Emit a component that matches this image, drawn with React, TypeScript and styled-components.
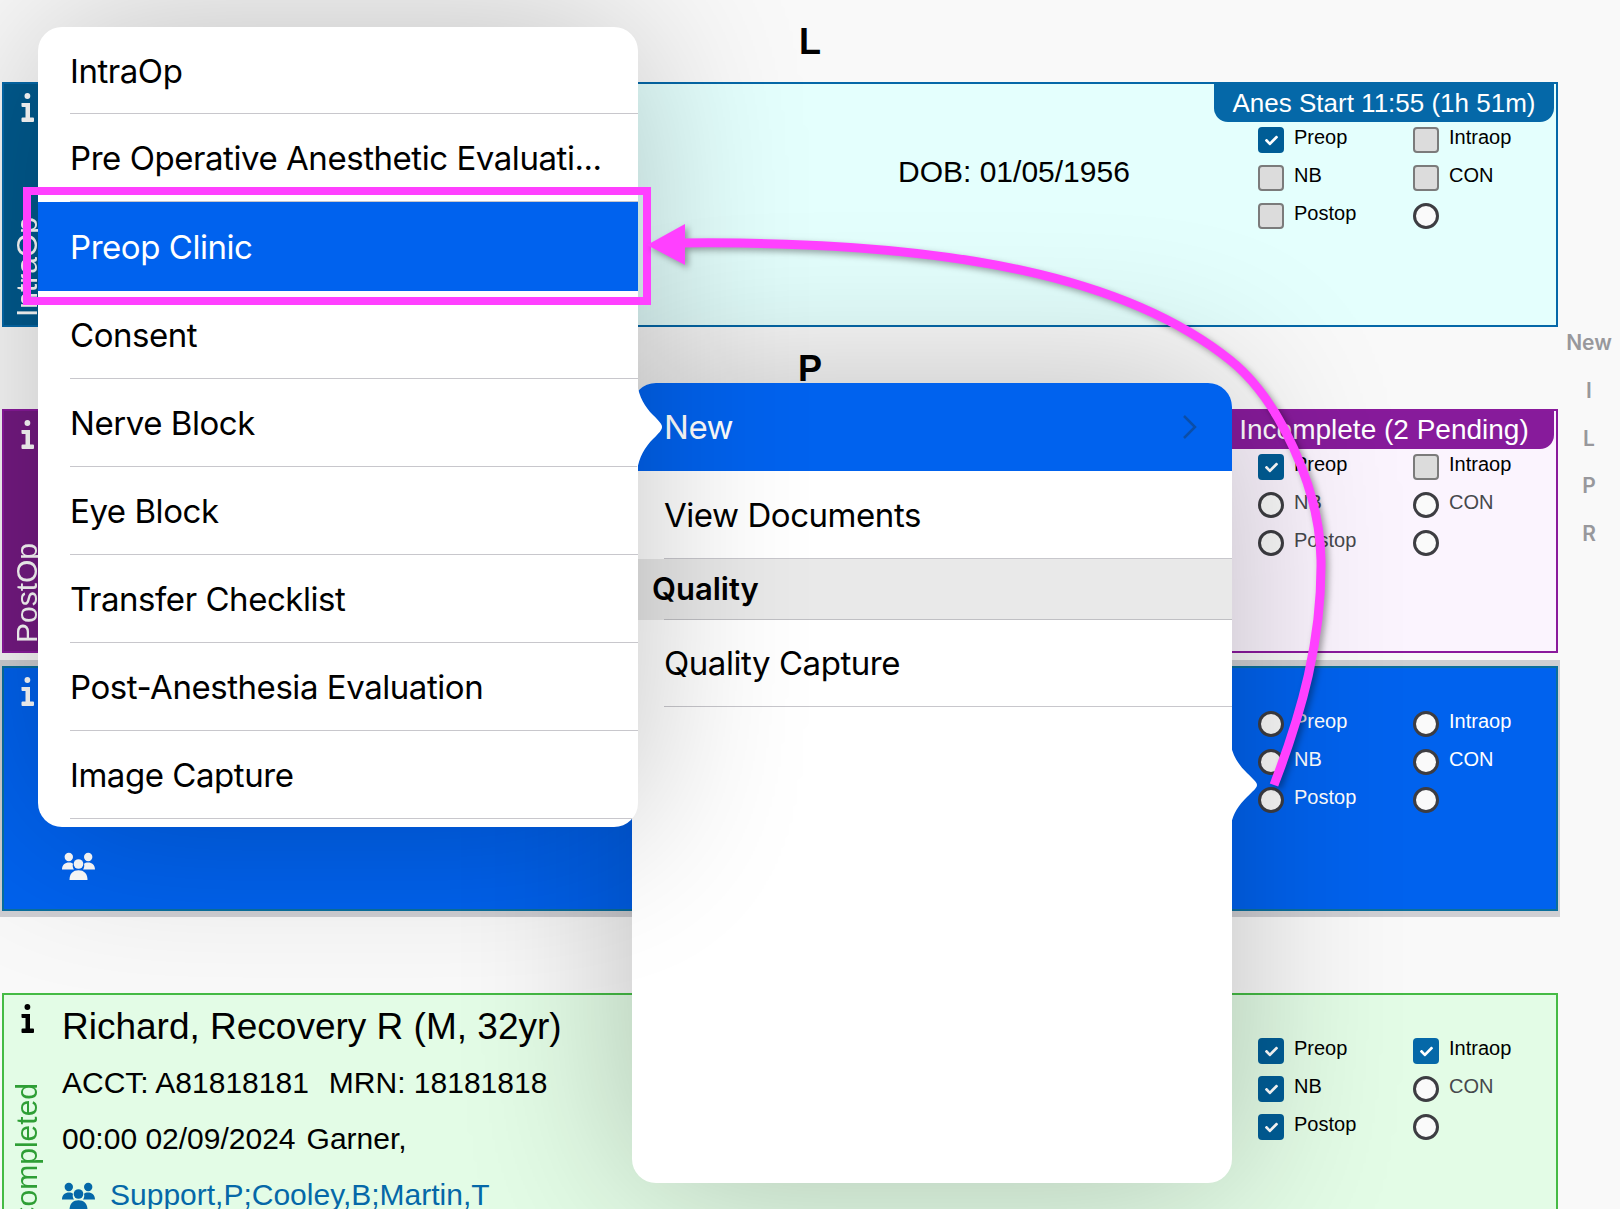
import React from "react";
import styled, { createGlobalStyle, css } from "styled-components";
import { FaCheck } from "react-icons/fa";

type Tone = "blue" | "purple" | "selected" | "green";

const tones: Record<Tone, { border: string; strip: string; bg: string; badge: string; ink: string; stripInk: string }> = {
  blue: { border: "#0568a8", strip: "#005a8e", bg: "#e4fffd", badge: "#0568a8", ink: "#000", stripInk: "#fff" },
  purple: { border: "#8a1a9c", strip: "#741a82", bg: "#fbf4fe", badge: "#871b9b", ink: "#000", stripInk: "#fff" },
  selected: { border: "#0a6f9c", strip: "#0062ee", bg: "#0062ee", badge: "#0062ee", ink: "#fff", stripInk: "#fff" },
  green: { border: "#45bb45", strip: "#e3fce6", bg: "#e3fce6", badge: "#45bb45", ink: "#000", stripInk: "#2e9e35" },
};

const GlobalStyle = createGlobalStyle`
  html, body { margin: 0; padding: 0; background: #f9f9f9; }
  #root { width: 1620px; height: 1209px; overflow: hidden; }
`;

const Page = styled.div`
  position: relative;
  display: flex;
  width: 1620px;
  height: 1209px;
  overflow: hidden;
  background: #f9f9f9;
  font-family: "Liberation Sans", Arial, sans-serif;
`;

const Main = styled.main`
  width: 1558px;
  flex: none;
  display: flex;
  flex-direction: column;
`;

const TopRule = styled.div`
  height: 2px;
  background: #c4c4c4;
`;

const SectionLabel = styled.div<{ $h: number }>`
  height: ${(p) => p.$h}px;
  flex: none;
  padding: 2px 0 0 62px;
  box-sizing: border-box;
  display: flex;
  align-items: center;
  justify-content: center;
  font-size: 36px;
  font-weight: 700;
  color: #000;
`;

const Card = styled.section<{ $tone: Tone; $h?: number; $mt?: number }>`
  position: relative;
  box-sizing: border-box;
  flex: none;
  height: ${(p) => p.$h ?? 245}px;
  margin-left: 2px;
  margin-top: ${(p) => p.$mt ?? 0}px;
  width: 1556px;
  display: grid;
  grid-template-columns: 58px 836px 1fr 298px;
  border: 2px solid ${(p) => tones[p.$tone].border};
  background: ${(p) => tones[p.$tone].bg};
  color: ${(p) => tones[p.$tone].ink};
`;

const SelectedBand = styled.div`
  flex: none;
  margin-top: 7px;
  width: 1560px;
  padding: 6px 0;
  background: #cfcfd3;
`;

const Strip = styled.div<{ $tone: Tone }>`
  display: flex;
  flex-direction: column;
  justify-content: space-between;
  align-items: flex-start;
  padding: 9px 0 ${(p) => (p.$tone === "green" ? 11 : 8)}px 6px;
  background: ${(p) => tones[p.$tone].strip};
  color: ${(p) => tones[p.$tone].stripInk};
`;

const InfoMark = styled.svg<{ $tone: Tone }>`
  display: block;
  margin-left: 11px;
  color: ${(p) => (p.$tone === "green" ? "#000" : "#fff")};
`;

const StripText = styled.div`
  writing-mode: vertical-rl;
  transform: rotate(180deg);
  font-size: 30px;
  line-height: 34px;
`;

const Info = styled.div`
  display: flex;
  flex-direction: column;
  padding-top: 3px;
`;

const Line = styled.div<{ $size?: number; $gap?: number; $h?: number }>`
  height: ${(p) => p.$h ?? 56}px;
  display: flex;
  align-items: center;
  gap: ${(p) => p.$gap ?? 0}px;
  font-size: ${(p) => p.$size ?? 30}px;
  white-space: nowrap;
`;

const TeamLine = styled.div<{ $tone: Tone }>`
  height: 56px;
  margin-top: auto;
  margin-bottom: 16px;
  display: flex;
  align-items: center;
  gap: 15px;
  font-size: 30px;
  white-space: nowrap;
  color: ${(p) => (p.$tone === "selected" ? "#fff" : "#0568a8")};
`;

const TeamGlyph = styled.svg`
  display: block;
  flex: none;
  margin-top: 2px;
`;

const Dob = styled.div`
  padding-top: 70px;
  font-size: 30px;
  line-height: 36px;
  white-space: nowrap;
`;

const Badge = styled.div<{ $tone: Tone; $h: number; $size: number }>`
  position: absolute;
  top: 0;
  right: 2px;
  width: 340px;
  height: ${(p) => p.$h}px;
  display: flex;
  align-items: center;
  justify-content: center;
  border-radius: 0 0 14px 14px;
  background: ${(p) => tones[p.$tone].badge};
  color: #fff;
  font-size: ${(p) => p.$size}px;
  white-space: nowrap;
`;

const Checks = styled.div`
  display: grid;
  grid-template-columns: 155px 155px;
  grid-auto-rows: 38px;
  padding-top: 37px;
  align-content: start;
`;

const CheckItem = styled.div`
  display: flex;
  align-items: center;
  gap: 10px;
  height: 38px;
`;

const markBase = css`
  box-sizing: border-box;
  width: 26px;
  height: 26px;
  flex: none;
`;

const CheckedBox = styled.span<{ $deep?: boolean }>`
  ${markBase}
  display: flex;
  align-items: center;
  justify-content: center;
  border-radius: 4px;
  background: ${(p) => (p.$deep ? "#005d96" : "#0568a8")};
  color: #fff;
  font-size: 13px;
`;

const EmptyBox = styled.span`
  ${markBase}
  border-radius: 4px;
  border: 2px solid #7b7b7b;
  background: #dcdcdc;
`;

const Radio = styled.span`
  ${markBase}
  border-radius: 50%;
  border: 3px solid #3d3d42;
  background: #fafafa;
`;

const MarkLabel = styled.span<{ $dim?: boolean }>`
  font-size: 20px;
  line-height: 24px;
  margin-top: -7px;
  white-space: nowrap;
  color: ${(p) => (p.$dim ? "#46484c" : "inherit")};
`;

const IndexRail = styled.nav`
  width: 62px;
  flex: none;
  padding-top: 319px;
  display: flex;
  flex-direction: column;
  align-items: center;
`;

const IndexItem = styled.span`
  height: 47.7px;
  display: flex;
  align-items: center;
  font-family: Inter, "Liberation Sans", sans-serif;
  font-size: 21px;
  font-weight: 600;
  color: #98989c;
`;

const Popover = styled.div<{ $left: number; $top: number; $w: number; $h: number; $z: number }>`
  position: absolute;
  left: ${(p) => p.$left}px;
  top: ${(p) => p.$top}px;
  width: ${(p) => p.$w}px;
  height: ${(p) => p.$h}px;
  z-index: ${(p) => p.$z};
  background: #fff;
  border-radius: 24px;
  box-shadow: 0 0 170px rgba(0, 0, 0, 0.24);
  font-family: Inter, "Liberation Sans", sans-serif;
  color: #000;
`;

const PopoverClip = styled.div`
  height: 100%;
  overflow: hidden;
  border-radius: 24px;
`;

const MenuRow = styled.div<{ $active?: boolean; $h?: number; $inset: number; $lift?: number }>`
  position: relative;
  box-sizing: border-box;
  height: ${(p) => p.$h ?? 88}px;
  display: flex;
  align-items: center;
  justify-content: space-between;
  padding: 0 34px ${(p) => p.$lift ?? 0}px ${(p) => p.$inset}px;
  font-size: 33px;
  letter-spacing: -0.45px;
  white-space: nowrap;
  background: ${(p) => (p.$active ? "#0062ee" : "transparent")};
  color: ${(p) => (p.$active ? "#fff" : "#000")};
  &::after {
    content: "";
    display: ${(p) => (p.$active ? "none" : "block")};
    position: absolute;
    left: ${(p) => p.$inset}px;
    right: 0;
    bottom: 0;
    height: 1px;
    background: #c8c7cc;
  }
`;

const GroupRow = styled.div`
  position: relative;
  box-sizing: border-box;
  height: 61px;
  display: flex;
  align-items: center;
  padding: 0 0 2px 20px;
  background: #e9e9e9;
  font-size: 31px;
  font-weight: 600;
  &::after {
    content: "";
    position: absolute;
    left: 32px;
    right: 0;
    bottom: 0;
    height: 1px;
    background: #c0c0c4;
  }
`;

const Wedge = styled.svg<{ $top: number }>`
  position: absolute;
  left: 100%;
  top: ${(p) => p.$top}px;
  margin-left: -1px;
  display: block;
`;

const Overlay = styled.svg`
  position: absolute;
  left: 0;
  top: 0;
  z-index: 5;
  pointer-events: none;
`;

const FocusFrame = styled.div`
  position: absolute;
  left: 23px;
  top: 187px;
  box-sizing: border-box;
  width: 628px;
  height: 118px;
  border: 8px solid #ff40ff;
  z-index: 4;
`;

const InfoIcon = ({ tone }: { tone: Tone }) => (
  <InfoMark $tone={tone} width="13" height="29" viewBox="0 0 13 29" fill="currentColor">
    <circle cx="6.4" cy="3" r="2.9" />
    <path d="M0.5 10 H9 V24.5 H12 Q13 24.5 13 25.5 V28 Q13 29 12 29 H1.5 Q0.5 29 0.5 28 V25.5 Q0.5 24.5 1.5 24.5 H4.5 V14 H1.5 Q0.5 14 0.5 13 Z" />
  </InfoMark>
);

const TeamIcon = () => (
  <TeamGlyph width="33" height="28" viewBox="0 0 33 28" fill="currentColor">
    <circle cx="6.8" cy="5" r="4.2" />
    <circle cx="26.2" cy="5" r="4.2" />
    <circle cx="16.5" cy="12" r="4.8" />
    <path d="M0 17.5 C0 13 3 10.5 7 10.5 C8.8 10.5 10 11 11 11.8 C10.4 14 10.8 16 12 17.5 Z" />
    <path d="M33 17.5 C33 13 30 10.5 26 10.5 C24.2 10.5 23 11 22 11.8 C22.6 14 22.2 16 21 17.5 Z" />
    <path d="M7.5 28 C7.5 21.5 11 18.2 16.5 18.2 C22 18.2 25.5 21.5 25.5 28 Z" />
  </TeamGlyph>
);

type Mark = { kind: "check" | "box" | "radio"; label?: string; dim?: boolean };

const MarkGrid = ({ marks }: { marks: Mark[] }) => (
  <Checks>
    {marks.map((m, i) => (
      <CheckItem key={i}>
        {m.kind === "check" && (
          <CheckedBox $deep={i % 2 === 0}>
            <FaCheck />
          </CheckedBox>
        )}
        {m.kind === "box" && <EmptyBox />}
        {m.kind === "radio" && <Radio />}
        {m.label && <MarkLabel $dim={m.dim}>{m.label}</MarkLabel>}
      </CheckItem>
    ))}
  </Checks>
);

const firstMenu = [
  "IntraOp",
  "Pre Operative Anesthetic Evaluati...",
  "Preop Clinic",
  "Consent",
  "Nerve Block",
  "Eye Block",
  "Transfer Checklist",
  "Post-Anesthesia Evaluation",
  "Image Capture",
];

export default function App() {
  return (
    <Page>
      <GlobalStyle />
      <Main>
        <TopRule />
        <SectionLabel $h={82}>L</SectionLabel>
        <Card $tone="blue">
          <Strip $tone="blue">
            <InfoIcon tone="blue" />
            <StripText>IntraOp</StripText>
          </Strip>
          <Info />
          <Dob>DOB: 01/05/1956</Dob>
          <MarkGrid
            marks={[
              { kind: "check", label: "Preop" },
              { kind: "box", label: "Intraop" },
              { kind: "box", label: "NB" },
              { kind: "box", label: "CON" },
              { kind: "box", label: "Postop" },
              { kind: "radio" },
            ]}
          />
          <Badge $tone="blue" $h={38} $size={26}>
            Anes Start 11:55 (1h 51m)
          </Badge>
        </Card>
        <SectionLabel $h={82}>P</SectionLabel>
        <Card $tone="purple" $h={244}>
          <Strip $tone="purple">
            <InfoIcon tone="purple" />
            <StripText>PostOp</StripText>
          </Strip>
          <Info />
          <div />
          <MarkGrid
            marks={[
              { kind: "check", label: "Preop" },
              { kind: "box", label: "Intraop" },
              { kind: "radio", label: "NB", dim: true },
              { kind: "radio", label: "CON", dim: true },
              { kind: "radio", label: "Postop", dim: true },
              { kind: "radio" },
            ]}
          />
          <Badge $tone="purple" $h={38} $size={28}>
            Incomplete (2 Pending)
          </Badge>
        </Card>
        <SelectedBand>
          <Card $tone="selected">
            <Strip $tone="selected">
              <InfoIcon tone="selected" />
            </Strip>
            <Info>
              <TeamLine $tone="selected">
                <TeamIcon />
              </TeamLine>
            </Info>
            <div />
            <MarkGrid
              marks={[
                { kind: "radio", label: "Preop" },
                { kind: "radio", label: "Intraop" },
                { kind: "radio", label: "NB" },
                { kind: "radio", label: "CON" },
                { kind: "radio", label: "Postop" },
                { kind: "radio" },
              ]}
            />
          </Card>
        </SelectedBand>
        <Card $tone="green" $mt={76}>
          <Strip $tone="green">
            <InfoIcon tone="green" />
            <StripText>Completed</StripText>
          </Strip>
          <Info>
            <Line $size={37} $h={57}>
              Richard, Recovery R (M, 32yr)
            </Line>
            <Line $gap={20}>
              <span>ACCT: A81818181</span>
              <span>MRN: 18181818</span>
            </Line>
            <Line $gap={11}>
              <span>00:00 02/09/2024</span>
              <span>Garner,</span>
            </Line>
            <TeamLine $tone="green">
              <TeamIcon />
              <span>Support,P;Cooley,B;Martin,T</span>
            </TeamLine>
          </Info>
          <div />
          <MarkGrid
            marks={[
              { kind: "check", label: "Preop" },
              { kind: "check", label: "Intraop" },
              { kind: "check", label: "NB" },
              { kind: "radio", label: "CON", dim: true },
              { kind: "check", label: "Postop" },
              { kind: "radio" },
            ]}
          />
        </Card>
      </Main>
      <IndexRail>
        {["New", "I", "L", "P", "R"].map((t) => (
          <IndexItem key={t}>{t}</IndexItem>
        ))}
      </IndexRail>

      <Popover $left={632} $top={383} $w={600} $h={800} $z={2}>
        <PopoverClip>
          <MenuRow $active $inset={32}>
            <span>New</span>
            <svg width="16" height="26" viewBox="0 0 16 26" fill="none" stroke="#0b4ea8" strokeWidth="2.5">
              <path d="M2 2 L13 13 L2 24" />
            </svg>
          </MenuRow>
          <MenuRow $inset={32}>View Documents</MenuRow>
          <GroupRow>Quality</GroupRow>
          <MenuRow $h={87} $inset={32} $lift={2}>
            Quality Capture
          </MenuRow>
        </PopoverClip>
        <Wedge $top={362} width="28" height="80" viewBox="0 0 28 80" fill="#fff">
          <path d="M0 0 C2 12 8 20 16 28 C22 34 26 37 26 40 C26 43 22 46 16 52 C8 60 2 68 0 80 Z" />
        </Wedge>
      </Popover>

      <Popover $left={38} $top={27} $w={600} $h={800} $z={3}>
        <PopoverClip>
          {firstMenu.map((label, i) => (
            <MenuRow key={label} $active={i === 2} $inset={32} $h={i === 0 ? 87 : i === 2 ? 89 : 88}>
              {label}
            </MenuRow>
          ))}
        </PopoverClip>
        <Wedge $top={356} width="26" height="88" viewBox="0 0 26 88" fill="#fff">
          <path d="M0 0 C2 14 8 24 16 32 C22 38 25 41 25 44 C25 47 22 50 16 56 C8 64 2 74 0 88 Z" />
        </Wedge>
      </Popover>

      <FocusFrame />
      <Overlay width="1620" height="1209" viewBox="0 0 1620 1209">
        <g style={{ filter: "drop-shadow(3px 3px 3px rgba(0,0,0,0.35))" }}>
          <path
            d="M1274 785 C1302 712 1322 640 1321 560 C1320 490 1280 400 1230 360 C1130 280 960 240 680 243"
            fill="none"
            stroke="#ff40ff"
            strokeWidth="9"
          />
          <path d="M647 245 L685 224 L685 265 Z" fill="#ff40ff" />
        </g>
      </Overlay>
    </Page>
  );
}
